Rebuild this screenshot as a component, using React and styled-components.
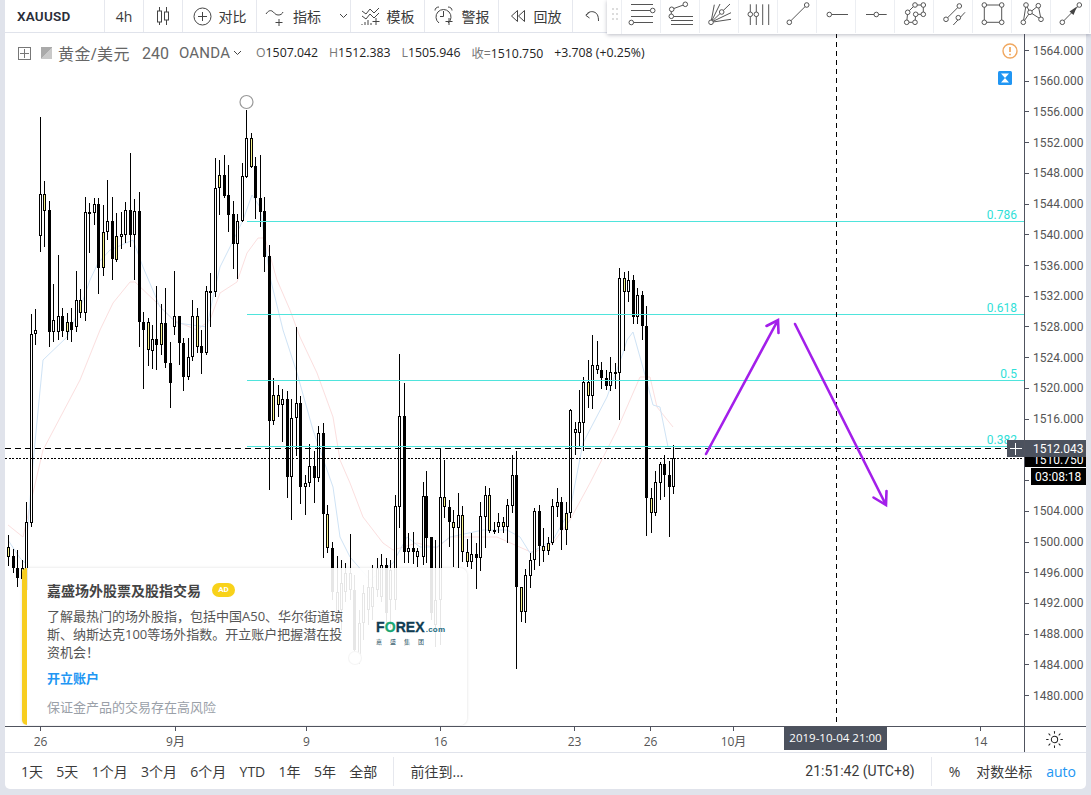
import React from "react";
import styled, { createGlobalStyle } from "styled-components";
import { Sun } from "lucide-react";

const FONT = `Roboto, "Noto Sans CJK SC", sans-serif`;
const CJK = `"Open Sans", "Noto Sans CJK SC", sans-serif`;

const Global = createGlobalStyle`
  html, body { margin: 0; padding: 0; background: #e0e3eb; }
  body { font-family: ${FONT}; color: #333; }
`;

const Page = styled.div`
  position: relative;
  width: 1091px;
  height: 795px;
  padding: 0 5px 6px;
  box-sizing: border-box;
  overflow: hidden;
  background: #e0e3eb;
`;
const Panel = styled.div`
  height: 100%;
  display: flex;
  flex-direction: column;
  background: #fff;
  border-radius: 0 0 5px 5px;
  overflow: hidden;
`;
const TopBar = styled.div`
  flex: none;
  height: 33px;
  box-sizing: border-box;
  display: flex;
  border-bottom: 1px solid #e0e3eb;
`;
const TopItem = styled.div`
  flex: none;
  box-sizing: border-box;
  width: ${(p) => p.$w}px;
  display: flex;
  align-items: center;
  justify-content: ${(p) => (p.$start ? "flex-start" : "center")};
  gap: ${(p) => p.$gap || 0}px;
  padding-left: ${(p) => p.$pl || 0}px;
  border-right: 1px solid #e6e8ee;
  font: 14px ${CJK};
  color: #3a3a3a;
  height: 32px;
`;
const SymbolName = styled.span`
  font: 600 13.5px ${FONT};
  color: #2a2e39;
  letter-spacing: 0.2px;
`;
const DrawingBar = styled.div`
  position: absolute;
  top: 0;
  right: 0;
  width: 484px;
  height: 34px;
  display: flex;
  background: #fff;
  box-shadow: 0 1px 4px rgba(60, 64, 90, 0.35);
  z-index: 5;
`;
const Grip = styled.div`
  flex: none;
  width: 15px;
  box-sizing: border-box;
  padding: 8px 4px 0 5px;
  display: grid;
  grid-template-columns: 2px 2px;
  grid-auto-rows: 2px;
  column-gap: 2px;
  row-gap: 3px;
  border-right: 1px solid #eceef2;
  i { background: #dcdcdc; display: block; }
`;
const DrawCell = styled.div`
  flex: none;
  width: 39px;
  height: 33px;
  box-sizing: border-box;
  border-right: 1px solid #eceef2;
  svg { display: block; }
`;
const ChartRow = styled.div`
  flex: none;
  height: 693px;
  display: flex;
`;
const Pane = styled.div`
  position: relative;
  flex: 1;
  min-width: 0;
  overflow: hidden;
`;
const Drawing = styled.svg`
  display: block;
  font-family: ${FONT};
  white-space: pre;
`;
const PriceAxis = styled.div`
  flex: none;
  width: 62px;
  border-left: 1px solid #50535e;
  box-sizing: border-box;
`;
const Legend = styled.div`
  position: absolute;
  left: 13px;
  top: 9px;
  height: 22px;
  display: flex;
  align-items: center;
  color: #555;
`;
const BoxIcon = styled.span`
  width: 13px;
  height: 13px;
  box-sizing: border-box;
  border: 1px solid #777;
  position: relative;
  margin-right: 10px;
  &::before { content: ""; position: absolute; left: 1px; right: 1px; top: 5px; height: 1px; background: #777; }
  &::after { content: ""; position: absolute; top: 1px; bottom: 1px; left: 5px; width: 1px; background: #777; }
`;
const Flag = styled.span`
  width: 11px;
  height: 12px;
  margin-right: 6px;
  background: linear-gradient(135deg, #aaa 50%, #c9c9c9 50%);
`;
const Instrument = styled.span`
  font: 16px ${CJK};
  color: #666;
  width: 84px;
  letter-spacing: 0.4px;
`;
const Interval = styled.span`
  font: 16px ${FONT};
  color: #666;
  width: 37px;
`;
const Exchange = styled.span`
  font: 15px ${FONT};
  color: #666;
  width: 54px;
  letter-spacing: 0.2px;
`;
const Ohlc = styled.span`
  font: 12.3px ${CJK};
  color: #222;
  margin-right: 11px;
  white-space: nowrap;
  b { font-weight: 400; color: #777; }
`;
const OhlcRow = styled.div`
  display: flex;
  margin-left: 14px;
`;
const AdCard = styled.div`
  position: absolute;
  left: 17px;
  top: 535px;
  width: 445px;
  height: 157px;
  box-sizing: border-box;
  padding: 13px 0 0 20px;
  display: flex;
  background: rgba(255, 255, 255, 0.9);
  border-left: 5px solid #f7cd1f;
  border-radius: 5px 7px 7px 5px;
  box-shadow: 0 0 3px rgba(0, 0, 0, 0.14);
`;
const AdText = styled.div`
  width: 300px;
  flex: none;
`;
const AdTitle = styled.div`
  display: flex;
  align-items: center;
  gap: 11px;
  height: 18px;
  font: 600 14px ${CJK};
  color: #444;
`;
const AdBadge = styled.span`
  width: 23px;
  height: 14px;
  border-radius: 7px;
  background: #f8d21a;
  color: #fff;
  font: 700 8px/14px ${FONT};
  text-align: center;
`;
const AdBody = styled.p`
  margin: 8px 0 0;
  font: 13px/18px ${CJK};
  color: #555;
`;
const AdLink = styled.div`
  margin-top: 8px;
  font: 600 13px/18px ${CJK};
  color: #2196f3;
`;
const AdNote = styled.div`
  margin-top: 11px;
  font: 13px/18px ${CJK};
  color: #9aa0a8;
`;
const Logo = styled.div`
  margin: 40px 0 0 29px;
  width: 66px;
  color: #0f3d52;
`;
const LogoMark = styled.div`
  font: 700 14px/13px "Liberation Sans", sans-serif;
  letter-spacing: 0.1px;
  white-space: nowrap;
  -webkit-text-stroke: 0.3px #0f3d52;
  em { font-style: normal; color: #1aa774; -webkit-text-stroke: 0.3px #1aa774; }
  small { font-size: 8px; letter-spacing: 0.2px; margin-left: 1px; -webkit-text-stroke: 0; color: #1d6a7e; }
`;
const LogoSub = styled.div`
  display: flex;
  justify-content: space-between;
  width: 48px;
  margin-top: 2px;
  font: 6px/8px ${CJK};
  color: #2c5566;
`;
const StatusBadge = styled.div`
  position: absolute;
  left: ${(p) => p.$x}px;
  top: ${(p) => p.$y}px;
`;
const TimeRow = styled.div`
  flex: none;
  height: 26px;
  display: flex;
  border-top: 1px solid #50535e;
  box-sizing: border-box;
`;
const TimeAxis = styled.div`
  flex: 1;
  min-width: 0;
`;
const AxisSettings = styled.div`
  flex: none;
  width: 62px;
  box-sizing: border-box;
  border-left: 1px solid #50535e;
  padding-right: 2px;
  display: flex;
  align-items: center;
  justify-content: center;
  color: #222;
`;
const BottomBar = styled.div`
  flex: none;
  height: 37px;
  box-sizing: border-box;
  display: flex;
  align-items: center;
  border-top: 1px solid #e0e3eb;
  padding-left: 16px;
  font: 14px ${CJK};
  color: #3a3a3a;
`;
const Range = styled.span`
  margin-right: 13.3px;
  white-space: nowrap;
`;
const BarSep = styled.span`
  width: 1px;
  height: 29px;
  background: #e6e8ee;
  margin: 0 ${(p) => p.$r}px 0 ${(p) => p.$l}px;
`;
const Spacer = styled.span`
  flex: 1;
`;
const Clock = styled.span`
  font: 14px ${FONT};
  white-space: nowrap;
`;
const Toggle = styled.span`
  margin-right: ${(p) => p.$r}px;
  color: ${(p) => (p.$on ? "#2196f3" : "#3a3a3a")};
  white-space: nowrap;
`;

const C = [
  [8,535,547,557,566,"y"],[13,549,556,568,573,"b"],[17,550,568,578,587,"b"],[22,560,568,579,588,"y"],
  [26,502,522,590,600,"w"],[31,314,334,523,527,"w"],[35,309,330,334,345,"w"],[40,117,194,236,252,"w"],
  [44,181,194,211,247,"y"],[49,201,210,332,347,"b"],[53,284,320,332,342,"w"],[58,255,316,332,340,"w"],
  [62,308,316,331,337,"b"],[67,313,322,332,340,"y"],[71,308,322,330,342,"b"],[76,271,300,327,332,"w"],
  [80,289,300,313,318,"y"],[85,197,212,313,321,"w"],[89,203,212,213,253,"w"],[94,198,204,213,225,"w"],
  [98,198,204,268,294,"b"],[103,205,232,268,276,"y"],[107,180,221,232,240,"w"],[112,197,221,259,280,"b"],
  [116,213,236,260,262,"y"],[121,212,234,237,249,"w"],[125,202,210,235,243,"w"],[130,153,210,235,247,"b"],
  [134,199,211,235,280,"w"],[139,192,211,322,347,"b"],[143,312,322,330,389,"b"],[148,318,322,350,366,"y"],
  [152,325,339,351,369,"w"],[156,286,339,345,370,"b"],[161,304,323,345,355,"y"],[165,288,323,363,368,"b"],
  [170,342,363,383,408,"b"],[174,271,316,327,335,"w"],[179,316,316,343,365,"b"],[183,338,343,377,391,"b"],
  [188,338,357,377,380,"w"],[192,300,316,357,361,"w"],[197,308,316,347,353,"y"],[201,330,346,353,374,"b"],
  [206,286,291,353,355,"w"],[210,273,291,292,327,"w"],[215,158,188,292,297,"w"],[219,160,175,188,215,"y"],
  [224,155,175,196,198,"b"],[228,165,195,215,232,"b"],[233,201,214,244,269,"b"],[237,214,221,244,279,"w"],
  [242,163,176,221,222,"w"],[246,110,138,177,178,"w"],[251,133,138,167,168,"y"],[255,157,166,198,219,"b"],
  [260,155,198,212,227,"b"],[264,197,211,257,272,"b"],[269,245,256,421,490,"b"],[273,378,395,421,425,"y"],
  [278,385,395,405,417,"y"],[282,389,399,405,442,"w"],[287,391,399,477,498,"b"],[291,399,418,477,520,"w"],
  [296,327,403,418,456,"w"],[300,396,403,487,504,"b"],[305,475,483,487,515,"w"],[309,444,466,483,487,"w"],
  [314,451,466,478,503,"b"],[318,426,433,478,482,"w"],[323,423,433,514,558,"b"],[327,505,514,548,553,"y"],
  [332,542,548,592,600,"b"],[337,556,592,613,620,"w"],[341,560,583,610,630,"w"],[345,563,573,592,602,"w"],
  [350,534,573,590,600,"w"],[354,575,590,650,660,"b"],[359,610,623,658,664,"w"],[363,585,593,623,640,"w"],
  [368,570,587,610,625,"w"],[372,565,587,607,620,"w"],[377,558,568,590,597,"w"],[381,554,565,597,602,"w"],
  [386,558,565,613,625,"b"],[390,560,570,600,628,"w"],[395,495,506,600,610,"w"],[399,354,416,507,528,"w"],
  [404,383,416,552,563,"b"],[408,533,548,552,563,"w"],[413,532,548,552,564,"b"],[417,548,551,557,567,"w"],
  [423,482,496,557,565,"w"],[426,471,496,538,563,"b"],[431,537,537,613,620,"b"],[435,540,600,625,647,"w"],
  [440,448,497,600,645,"w"],[444,460,497,507,518,"y"],[449,500,507,522,547,"b"],[453,510,522,528,567,"y"],
  [458,493,515,528,568,"w"],[462,506,515,552,562,"y"],[467,539,552,562,567,"y"],[471,533,554,562,569,"w"],
  [476,543,554,558,589,"b"],[480,502,516,558,571,"w"],[485,486,495,517,548,"w"],[489,488,495,531,533,"y"],
  [494,522,530,532,534,"w"],[498,513,522,527,533,"w"],[503,517,522,527,533,"y"],[507,499,505,527,543,"w"],
  [512,455,475,506,513,"w"],[516,451,475,587,669,"b"],[521,587,587,612,622,"y"],[525,569,575,612,623,"w"],
  [530,553,560,576,588,"w"],[534,508,511,560,570,"w"],[539,505,511,546,566,"b"],[543,528,546,551,562,"y"],
  [548,537,543,551,555,"y"],[552,499,506,543,545,"w"],[557,488,502,507,517,"w"],[561,497,502,530,550,"b"],
  [566,502,513,530,545,"y"],[570,409,410,513,518,"w"],[575,422,429,433,455,"w"],[579,390,422,433,447,"w"],
  [583,377,382,423,451,"w"],[588,360,382,396,408,"y"],[592,335,365,396,409,"w"],[597,341,365,370,374,"w"],
  [601,362,370,378,389,"b"],[606,370,378,386,390,"b"],[610,357,372,386,391,"w"],[615,363,372,373,389,"w"],
  [619,268,278,373,420,"w"],[624,272,278,292,351,"y"],[628,271,280,292,302,"w"],[633,275,280,317,324,"b"],
  [637,288,295,317,324,"w"],[642,291,295,326,340,"b"],[646,306,326,498,536,"b"],[651,488,498,513,533,"y"],
  [655,471,482,513,516,"w"],[660,462,464,483,500,"w"],[664,455,464,475,497,"b"],[669,461,475,487,537,"b"],
  [673,445,458,487,494,"w"],
];

const PINK = "8,525 23,537 33,493 43,450 80,380 100,330 113,303 130,282 135,282 157,303 173,320 197,330 210,320 220,293 237,282 247,253 258,238 265,238 277,280 290,310 300,337 317,373 333,417 340,460 350,483 363,517 383,543 393,550 417,543 437,548 450,537 473,537 497,537 533,553 553,543 570,520 590,483 617,430 640,377 650,377 657,407 673,427";
const BLUE = "8,540 20,558 25,563 33,463 43,360 67,337 82,303 90,280 98,263 110,250 133,240 143,267 160,307 177,323 207,327 213,297 220,267 232,243 243,220 252,195 260,207 270,277 283,330 297,373 313,430 333,487 340,537 350,557 370,580 393,563 407,537 420,547 437,547 450,537 483,530 507,530 520,537 530,553 553,540 570,510 583,443 607,397 623,353 627,340 633,332 645,375 653,405 660,407 668,447";

const Candle = ({ c: [x, hi, top, bot, lo, t] }) => (
  <g>
    <rect x={x} y={hi} width="1" height={lo - hi} fill="#000" />
    {t === "b" ? (
      <rect x={x - 1} y={top} width="3" height={bot - top} fill="#000" />
    ) : (
      <rect x={x - 0.5} y={top + 0.5} width="2" height={Math.max(bot - top - 1, 1)} fill={t === "y" ? "#f6f28a" : "#fff"} stroke="#000" />
    )}
  </g>
);

const FIBS = [[221.5, "0.786", 219], [314.5, "0.618", 312], [380.5, "0.5", 378], [446.5, "0.382", 444]];

const ChartDrawing = () => (
  <Drawing width="1019" height="693" viewBox="5 33 1019 693">
    <polyline points={PINK} fill="none" stroke="#fbdfdf" strokeWidth="1" />
    <polyline points={BLUE} fill="none" stroke="#cfe3f5" strokeWidth="1" />
    <g shapeRendering="crispEdges">{C.map((c, i) => <Candle key={i} c={c} />)}</g>
    <line x1="5" y1="448.5" x2="1024" y2="448.5" stroke="#000" strokeDasharray="6 4" shapeRendering="crispEdges" />
    <line x1="5" y1="458.5" x2="1024" y2="458.5" stroke="#000" strokeDasharray="2 1.5" shapeRendering="crispEdges" />
    {FIBS.map(([y, l, ty]) => (
      <g key={l}>
        <line x1="247" y1={y} x2="1024" y2={y} stroke="#4fe4dc" shapeRendering="crispEdges" />
        <text x="1017" y={ty} textAnchor="end" fontSize="12" fill="#30e0d8">{l}</text>
      </g>
    ))}
    <line x1="836.5" y1="33" x2="836.5" y2="726" stroke="#000" strokeDasharray="5 4" shapeRendering="crispEdges" />
    <circle cx="246.5" cy="102" r="6.5" fill="#fff" stroke="#999" strokeWidth="1.2" />
    <circle cx="355" cy="658" r="6.5" fill="#fff" stroke="#999" strokeWidth="1.2" />
    <g fill="none" stroke="#a31fea" strokeWidth="2.6" strokeLinecap="round">
      <path d="M706 454 L778 320 M766.5 326 L778 320 L778.5 333" />
      <path d="M795 324 L886 505 M873.5 497.5 L886 505 L886.5 491" />
    </g>
    <rect x="1007" y="440" width="17" height="17" fill="#4c525e" />
    <path d="M1010 448.5 H1022 M1015.5 442.5 V454.5" stroke="#fff" strokeWidth="1" shapeRendering="crispEdges" />
  </Drawing>
);

const PRICES = Array.from({ length: 22 }, (_, i) => [1564 - i * 4, 50 + i * 30.72]);
const COVERED = [1512, 1508];

const PriceDrawing = () => (
  <Drawing width="61" height="693" viewBox="1025 33 61 693">
    {PRICES.map(([p, y]) => (
      <g key={p}>
        <rect x="1025" y={Math.round(y)} width="4" height="1" fill="#50535e" />
        {!COVERED.includes(p) && <text x="1033" y={y + 4.5} fontSize="12" fill="#555">{p}.000</text>}
      </g>
    ))}
    <rect x="1025" y="457" width="61" height="10" fill="#000" />
    <svg x="1025" y="457" width="61" height="10" viewBox="1025 457 61 10">
      <text x="1033" y="464" fontSize="12" fill="#fff">1510.750</text>
    </svg>
    <rect x="1025" y="440" width="61" height="17" fill="#4c525e" />
    <text x="1033" y="453" fontSize="12" fill="#fff">1512.043</text>
    <rect x="1031" y="468" width="55" height="17" fill="#000" />
    <text x="1035" y="481" fontSize="12" fill="#fff">03:08:18</text>
  </Drawing>
);

const TIMES = [[40, "26"], [175, "9月"], [306, "9"], [440, "16"], [574, "23"], [650, "26"], [733, "10月"], [980, "14"]];

const TimeDrawing = () => (
  <Drawing width="1019" height="25" viewBox="5 726 1019 25" style={{ fontFamily: CJK }}>
    {TIMES.map(([x, l]) => (
      <g key={x}>
        <rect x={x} y="726" width="1" height="4" fill="#50535e" />
        <text x={x + 0.5} y="745" textAnchor="middle" fontSize="12" fill="#555">{l}</text>
      </g>
    ))}
    <rect x="784" y="726" width="103" height="23" fill="#4c525e" />
    <text x="835.5" y="741" textAnchor="middle" fontSize="11.5" fill="#fff">{"2019-10-04  21:00"}</text>
  </Drawing>
);

const S = { fill: "none", stroke: "#444", strokeWidth: 1 };
const Ico = ({ w, h = 20, children }) => (
  <svg width={w} height={h} viewBox={`0 0 ${w} ${h}`} {...S}>{children}</svg>
);

const CandleIcon = () => (
  <Ico w={14} h={20}>
    <path d="M3.5 1v4M3.5 16v3M10.5 1v5M10.5 14v5" />
    <rect x="1.5" y="5" width="4" height="11" />
    <rect x="8.5" y="6" width="4" height="8" />
  </Ico>
);
const PlusCircle = () => (
  <Ico w={19} h={19}>
    <circle cx="9.5" cy="9.5" r="8.5" />
    <path d="M9.5 5v9M5 9.5h9" />
  </Ico>
);
const IndicatorIcon = () => (
  <Ico w={22} h={20}>
    <path d="M1 8c2-3 4-4 6-3s3 4 6 4 4-1 5-3" />
    <path d="M14 13v7M10.5 16.5h7" />
  </Ico>
);
const TemplateIcon = () => (
  <Ico w={19} h={20}>
    <path d="M1 5l4 3 4-5 4 4 5-5" />
    <path d="M1 10l4 3 4-5 4 4 5-5" />
    <path d="M1 19v-1M4 19v-3M7 19v-5M10 19v-2" />
    <path d="M14 12v7M10.5 15.5h7" transform="translate(1 0)" />
  </Ico>
);
const AlarmIcon = () => (
  <Ico w={21} h={20}>
    <path d="M14 17a7.5 7.5 0 1 0-9 0" />
    <path d="M9.5 5v5.5H6" />
    <path d="M1 4.5c0-2 1.5-3.5 4-3.5M18 4.5c0-2-1.5-3.5-4-3.5" />
    <path d="M15 12v7M11.5 15.5h7" />
  </Ico>
);
const RewindIcon = () => (
  <Ico w={16} h={14}>
    <path d="M7.5 1.5L1.5 7l6 5.5zM14.5 1.5L8.5 7l6 5.5z" />
  </Ico>
);
const UndoIcon = () => (
  <Ico w={15} h={14}>
    <path d="M1 6.5l3.5-3.5M1 6.5L4.5 9" />
    <path d="M1 6C3 3 6 2 9 3s4.5 3.5 4.5 9" />
  </Ico>
);

const Dot = ({ p }) => <circle cx={p[0]} cy={p[1]} r="2.3" fill="#fff" stroke="#555" />;
const Pts = ({ d, dots = [], children }) => (
  <svg width="38" height="33" viewBox="0 0 38 33" fill="none" stroke="#555" strokeWidth="1">
    <path d={d} />
    {children}
    {dots.map((p, i) => <Dot key={i} p={p} />)}
  </svg>
);
const DRAW = [
  { d: "M9 4.5H31M9 10.5H29M9 16.5H31M11 22.5H31", dots: [[30.7, 10.5], [9.3, 22.5]] },
  { d: "M10.7 9.3L24.3 4.3M10.3 9.3V16.3M12.5 16.5H32M10 20.5H32M10 24.5H32", dots: [[10.7, 9.3], [24.3, 4.3], [10.3, 16.3]] },
  { d: "M11 22.3L30 4M11 22.3L20 4M11 22.3L14.3 4.7M11 22.3L31 12.7M11 22.3L31 19.3", dots: [[11, 22.3], [21.7, 12]] },
  { d: "M11.3 4.3V25M17.3 4.3V25M23.7 4.3V25M29.7 4.3V25", dots: [[11.3, 14.3], [17.3, 14.3]] },
  { d: "M11.3 22.3L28.7 5", dots: [[11.3, 22.3], [28.7, 5]] },
  { d: "M12.3 14.5H31", dots: [[12.3, 14.5]] },
  { d: "M10 14.5H30.7", dots: [[20.3, 14.5]] },
  { d: "M12.7 12.3L20 5H28.3V14.3H20.7L20 22.3H11.7L12.7 12.3", dots: [[20, 5], [28.3, 5], [28.3, 14.3], [20.7, 14.3], [20, 22.3], [11.7, 22.3], [12.7, 12.3]] },
  { d: "M12 19.3L25.3 6M19.3 25L31 12.3", dots: [[12, 19.3], [25.3, 6], [24.3, 17.7]] },
  { d: "M11.3 5H28.7V22.3H11.3Z", dots: [[11.3, 5], [28.7, 5], [28.7, 22.3], [11.3, 22.3]] },
  { d: "M11.3 22.3L14 5L18 12.3L26.3 5.7L29 19.3L18 12.3L11.3 22.3", dots: [[11.3, 22.3], [14, 5], [18, 12.3], [26.3, 5.7], [29, 19.3]] },
  { d: "M11.3 22.3L28.3 5", dots: [[11.3, 22.3], [28.3, 5]], head: true },
];

const Alert = () => (
  <svg width="16" height="16" viewBox="0 0 16 16">
    <circle cx="8" cy="8" r="7" fill="#fff" stroke="#f0a860" strokeWidth="1.4" />
    <path d="M8 4v5M8 10.7v1.6" stroke="#ee9a45" strokeWidth="1.5" />
  </svg>
);
const Hourglass = () => (
  <svg width="14" height="14" viewBox="0 0 14 14">
    <rect width="14" height="14" rx="1.5" fill="#2196f3" />
    <path d="M3 2.5h8L7 7zM3 11.5h8L7 7z" fill="#fff" />
  </svg>
);

export default function App() {
  return (
    <Page>
      <Global />
      <Panel>
        <TopBar>
          <TopItem $w={100} $start $pl={12}><SymbolName>XAUUSD</SymbolName></TopItem>
          <TopItem $w={39}>4h</TopItem>
          <TopItem $w={39}><CandleIcon /></TopItem>
          <TopItem $w={74} $gap={7}><PlusCircle />对比</TopItem>
          <TopItem $w={94} $start $pl={8} $gap={6}><IndicatorIcon />指标<Chev $ml={12} /></TopItem>
          <TopItem $w={74} $gap={7}><TemplateIcon />模板</TopItem>
          <TopItem $w={74} $gap={7}><AlarmIcon />警报</TopItem>
          <TopItem $w={74} $gap={8}><RewindIcon />回放</TopItem>
          <TopItem $w={40}><UndoIcon /></TopItem>
        </TopBar>
        <ChartRow>
          <Pane>
            <ChartDrawing />
            <Legend>
              <BoxIcon />
              <Flag />
              <Instrument>黄金/美元</Instrument>
              <Interval>240</Interval>
              <Exchange>OANDA</Exchange>
              <Chev />
              <OhlcRow>
                <Ohlc><b>O</b>1507.042</Ohlc>
                <Ohlc><b>H</b>1512.383</Ohlc>
                <Ohlc><b>L</b>1505.946</Ohlc>
                <Ohlc><b>收=</b>1510.750</Ohlc>
                <Ohlc>+3.708 (+0.25%)</Ohlc>
              </OhlcRow>
            </Legend>
            <StatusBadge $x={997} $y={10}><Alert /></StatusBadge>
            <StatusBadge $x={993} $y={37}><Hourglass /></StatusBadge>
            <AdCard>
              <AdText>
                <AdTitle>嘉盛场外股票及股指交易<AdBadge>AD</AdBadge></AdTitle>
                <AdBody>了解最热门的场外股指，包括中国A50、华尔街道琼斯、纳斯达克100等场外指数。开立账户把握潜在投资机会！</AdBody>
                <AdLink>开立账户</AdLink>
                <AdNote>保证金产品的交易存在高风险</AdNote>
              </AdText>
              <Logo>
                <LogoMark>F<em>O</em>REX<small>.com</small></LogoMark>
                <LogoSub><span>嘉</span><span>盛</span><span>集</span><span>团</span></LogoSub>
              </Logo>
            </AdCard>
          </Pane>
          <PriceAxis><PriceDrawing /></PriceAxis>
        </ChartRow>
        <TimeRow>
          <TimeAxis><TimeDrawing /></TimeAxis>
          <AxisSettings><Sun size={19} strokeWidth={1.3} /></AxisSettings>
        </TimeRow>
        <BottomBar>
          <Range>1天</Range><Range>5天</Range><Range>1个月</Range><Range>3个月</Range><Range>6个月</Range>
          <Range>YTD</Range><Range>1年</Range><Range>5年</Range><Range>全部</Range>
          <BarSep $l={3} $r={16} />
          <Range>前往到...</Range>
          <Spacer />
          <Clock>21:51:42 (UTC+8)</Clock>
          <BarSep $l={16} $r={17} />
          <Toggle $r={16}>%</Toggle>
          <Toggle $r={14}>对数坐标</Toggle>
          <Toggle $r={10} $on>auto</Toggle>
        </BottomBar>
      </Panel>
      <DrawingBar>
        <Grip>{Array.from({ length: 6 }, (_, i) => <i key={i} />)}</Grip>
        {DRAW.map((ic, i) => (
          <DrawCell key={i}>
            <Pts d={ic.d} dots={ic.dots}>
              {ic.head && <path d="M26 6.5L18.5 11.5L22.5 15Z" fill="#444" stroke="none" />}
            </Pts>
          </DrawCell>
        ))}
      </DrawingBar>
    </Page>
  );
}

function Chev({ $ml = 0 }) {
  return (
    <svg width="9" height="6" viewBox="0 0 9 6" style={{ marginLeft: $ml }} fill="none" stroke="#444">
      <path d="M1 1l3.5 3.5L8 1" />
    </svg>
  );
}
